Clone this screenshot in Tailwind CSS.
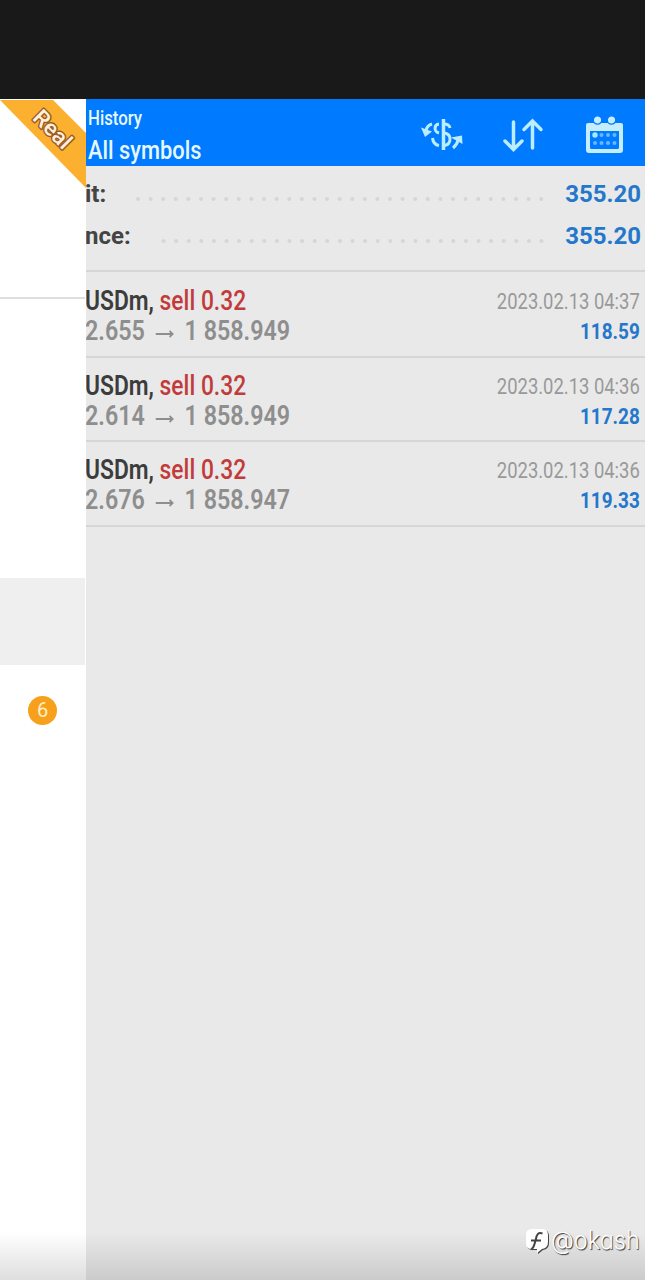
<!DOCTYPE html>
<html lang="en">
<head>
  <meta charset="UTF-8" />
  <meta name="viewport" content="width=device-width, initial-scale=1.0" />
  <title>History</title>
  <script src="https://cdn.jsdelivr.net/npm/@tailwindcss/browser@4"></script>
</head>
<body class="relative w-[645px] h-[1280px] overflow-hidden bg-[#e9e9e9] font-['Roboto',sans-serif] flex flex-col">
  <div class="h-[99px] shrink-0 bg-[#191919]"></div>

  <div class="flex flex-1">
    <!-- Drawer -->
    <aside class="relative w-[86px] shrink-0 bg-white flex flex-col overflow-hidden">
      <svg class="h-[90px] w-[86px] shrink-0" viewBox="0 0 86 90">
        <path d="M0 1H53L86 34V89Z" fill="#fbb02f" />
        <text x="53" y="38" transform="rotate(45 53 30)" text-anchor="middle" font-size="22" font-weight="500" textLength="45" lengthAdjust="spacingAndGlyphs" fill="#fff1dc" stroke="#9a5a26" stroke-width="2.800" paint-order="stroke" stroke-linejoin="round">Real</text>
      </svg>
      <div class="mt-[108px] h-[2px] w-[85px] bg-[#dedede]"></div>
      <div class="mt-[279px] h-[87px] w-[85px] bg-[#efefef]"></div>
      <div class="mt-[31px] ml-[28px] size-[29px] rounded-full bg-[#f6a01c] text-[#fff0c8] text-[20px] leading-[29px] text-center">6</div>
    </aside>

    <!-- History -->
    <main class="flex-1 overflow-hidden">
      <header class="h-[67px] bg-[#007aff] text-[#e6f8ff] flex">
        <div class="w-[334px] pl-[2px] pt-[8px] whitespace-nowrap">
          <div class="text-[20px] leading-[23px] origin-left scale-x-[0.84] font-medium">History</div>
          <div class="mt-[5px] text-[26px] leading-[30px] origin-left scale-x-[0.84] font-medium">All symbols</div>
        </div>
        <svg class="mt-[14px] w-[44px] h-[44px]" viewBox="0 0 44 44" fill="none" stroke="#b9edff" stroke-width="3">
          <path d="M23.500 6V37" stroke-width="3.500" />
          <path d="M24 11C27 11 29.500 12.500 30 15" />
          <path d="M24 20C28.500 20.500 30 22.500 30 26C30 30 28 32 24 32.500" />
          <path d="M19 11C14 11.500 13.500 18.500 19 20" />
          <path d="M12.500 25C13 29.500 15.500 32 19 32.500" />
          <path d="M12 11C8.500 12 6.500 14 6 18" />
          <path d="M1 14.500L12 18.500L5 24Z" fill="#b9edff" stroke="none" />
          <path d="M33 35C36 32.500 37.500 30 38 27" />
          <path d="M31 24.500L42 22.500L42.500 31Z" fill="#b9edff" stroke="none" />
        </svg>
        <svg class="mt-[14px] ml-[38px] w-[44px] h-[44px]" viewBox="0 0 44 44" fill="none" stroke="#b9edff" stroke-width="3.500" stroke-linecap="round">
          <path d="M11.500 9V36M3 28L11.500 36.500L20 28" />
          <path d="M30.500 35V8M22 16.500L30.500 8L39 16.500" />
        </svg>
        <svg class="mt-[14px] ml-[37px] w-[44px] h-[44px]" viewBox="0 0 44 44">
          <path d="M5 10H38Q40 10 40 12V37Q40 40 37 40H6Q3 40 3 37V12Q3 10 5 10ZM7 18V34.500Q7 36 8.500 36H34.500Q36 36 36 34.500V18Z" fill="#c4eeff" fill-rule="evenodd" />
          <g fill="#c4eeff" stroke="#007aff" stroke-width="1.200">
            <circle cx="14.500" cy="7" r="4.200" />
            <circle cx="28.500" cy="7" r="4.200" />
          </g>
          <circle cx="12" cy="22" r="2.700" fill="#a8eaff" />
          <g fill="#66b9ff">
            <circle cx="18.500" cy="22" r="2" /><circle cx="25" cy="22" r="2" /><circle cx="31.500" cy="22" r="2" />
            <circle cx="12" cy="30" r="2" /><circle cx="18.500" cy="30" r="2" /><circle cx="25" cy="30" r="2" /><circle cx="31.500" cy="30" r="2" />
          </g>
        </svg>
      </header>

      <section class="h-[104px] pt-[7px] text-[24px] leading-[42px] font-bold">
        <div class="h-[42px] flex whitespace-nowrap text-[#444444]">
          <span class="-ml-px w-[49px]">it:</span>
          <svg class="w-[416px] h-[42px]"><path d="M4 26H412" stroke="#d6d6d6" stroke-width="4" stroke-linecap="round" stroke-dasharray="0 12.600" /></svg>
          <span class="ml-auto mr-[4px] text-[#2577cb]">355.20</span>
        </div>
        <div class="h-[42px] flex whitespace-nowrap text-[#444444]">
          <span class="-ml-px w-[74px]">nce:</span>
          <svg class="w-[391px] h-[42px]"><path d="M4.500 26H387" stroke="#d6d6d6" stroke-width="4" stroke-linecap="round" stroke-dasharray="0 12.600" /></svg>
          <span class="ml-auto mr-[4px] text-[#2577cb]">355.20</span>
        </div>
      </section>

      <ul id="deals" class="border-t-2 border-[#d6d6d6]"></ul>
    </main>
  </div>

  <!-- Bottom shade and watermark -->
  <div class="absolute inset-x-0 bottom-0 h-[48px] bg-linear-to-b from-black/0 to-black/13"></div>
  <div class="absolute left-[525px] top-[1225px] flex whitespace-nowrap">
    <svg class="w-[26px] h-[30px]" viewBox="0 0 26 30">
      <path d="M8 5H18Q24 5 24 11V18Q24 24 18 25L13 29V25H8Q2 25 2 19V11Q2 5 8 5Z" fill="#444" />
      <path d="M7 4H17Q23 4 23 10V17Q23 23 17 24L12 28V24H7Q1 24 1 18V10Q1 4 7 4Z" fill="#fff" />
      <path d="M17.500 8.500C13 7 11.500 10 11 14L9.500 19Q9 22 6.500 24.500M6 15.500H16" fill="none" stroke="#444" stroke-width="2" />
    </svg>
    <span class="font-['Inter',sans-serif] font-light text-[25px] leading-[30px] text-white origin-left scale-x-[0.94] [font-feature-settings:'cv11'] [text-shadow:1px_1px_1px_#333]">@okash</span>
  </div>

  <script>
    const deals = [
      { from: '2.655', to: '1 858.949', time: '2023.02.13 04:37', profit: '118.59', size: 'h-[86px] pt-[14px]' },
      { from: '2.614', to: '1 858.949', time: '2023.02.13 04:36', profit: '117.28', size: 'h-[84px] pt-[13px]' },
      { from: '2.676', to: '1 858.947', time: '2023.02.13 04:36', profit: '119.33', size: 'h-[85px] pt-[13px]' },
    ];
    document.getElementById('deals').innerHTML = deals.map(d => `
      <li class="${d.size} border-b-2 border-[#d6d6d6] flex justify-between whitespace-nowrap">
        <div class="-ml-px w-[250px]">
          <div class="text-[27px] leading-[30px] font-medium text-[#3c3c3c] origin-left scale-x-[0.845]"><span class="font-semibold">USDm,</span> <span class="text-[#c23b3b]">sell 0.32</span></div>
          <div class="text-[27px] leading-[30px] font-semibold text-[#8e8e8e] origin-left scale-x-[0.863] flex">${d.from}<span class="mx-[10px] w-[26px] text-center"><svg class="w-[26px] h-[34px]" viewBox="0 0 26 34" fill="none" stroke="#8e8e8e" stroke-width="2"><path d="M3 18H22M19 15L22.500 18L19 21" /></svg></span>${d.to}</div>
        </div>
        <div class="pr-[5px] text-right">
          <div class="text-[22px] leading-[31px] text-[#999999] origin-right scale-x-[0.837]">${d.time}</div>
          <div class="text-[22px] leading-[30px] font-bold text-[#2577cb] origin-right scale-x-[0.86]">${d.profit}</div>
        </div>
      </li>`).join('');
  </script>
</body>
</html>
